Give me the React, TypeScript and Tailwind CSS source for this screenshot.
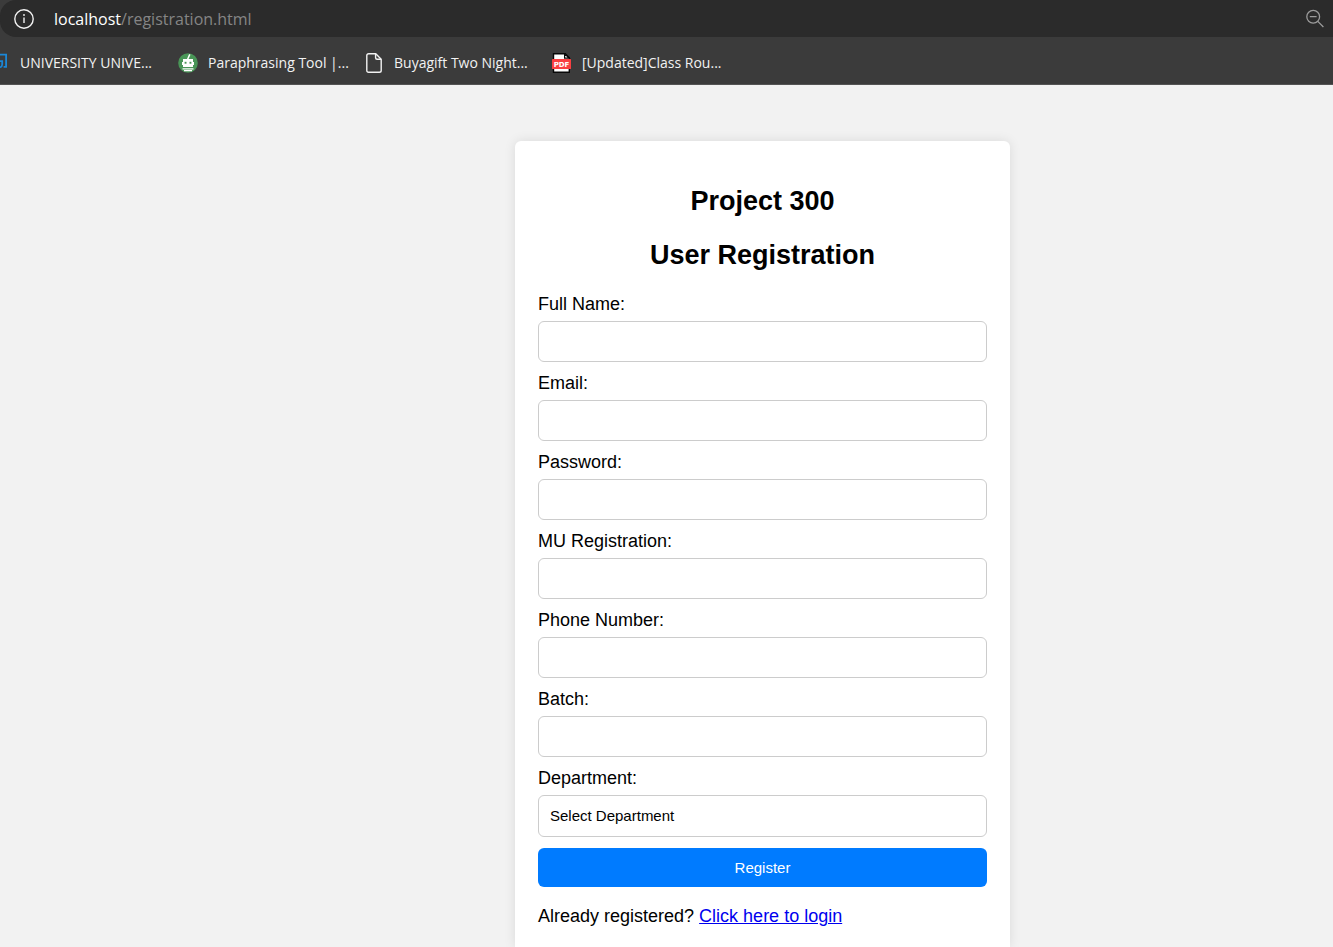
const fields = [
  { id: "name", label: "Full Name:", type: "text" },
  { id: "email", label: "Email:", type: "email" },
  { id: "password", label: "Password:", type: "password" },
  { id: "registration", label: "MU Registration:", type: "text" },
  { id: "phone", label: "Phone Number:", type: "tel" },
  { id: "batch", label: "Batch:", type: "text" },
];

function InfoIcon() {
  return (
    <svg className="size-5 shrink-0" viewBox="0 0 20 20" fill="none" stroke="#f2f2f2" strokeWidth="1.4" aria-hidden="true">
      <circle cx="10" cy="10" r="9.2" />
      <path d="M10 8.5v5.5" />
      <circle cx="10" cy="6" r="0.9" fill="#f2f2f2" stroke="none" />
    </svg>
  );
}

function ZoomOutIcon() {
  return (
    <svg className="size-5" viewBox="0 0 20 20" fill="none" stroke="#9b9b9b" strokeWidth="1.3" aria-hidden="true">
      <circle cx="8.2" cy="7.8" r="6.4" />
      <path d="M4.8 7.6h6.8M12.8 12.4l5.6 5.6" />
    </svg>
  );
}

function CornerIcon() {
  return (
    <svg className="h-5 w-2 shrink-0" viewBox="0 0 8 20" fill="none" stroke="#1b87d6" strokeWidth="1.8" aria-hidden="true">
      <path d="M0 1.6h6.1v12.2H3.6M0 8.2h2.2v3.2q0 2-2.2 3" />
    </svg>
  );
}

function RobotIcon() {
  return (
    <svg className="size-5 shrink-0" viewBox="0 0 20 20" aria-hidden="true">
      <circle cx="10" cy="10" r="9.8" fill="#499557" />
      <path d="M9.5 6.5 11.8 1.4" stroke="#fff" strokeWidth="1.5" />
      <path d="M5 6h10v3h1v3h-1v2H5v-2H4V9h1z" fill="#fff" />
      <rect x="6.6" y="8.8" width="1.9" height="1.9" fill="#499557" />
      <rect x="11.5" y="8.8" width="1.9" height="1.9" fill="#499557" />
      <path d="M4.5 15.8h11M6 17.6h8" stroke="#fff" strokeWidth="1.3" />
    </svg>
  );
}

function PageIcon() {
  return (
    <svg className="h-5 w-4 shrink-0" viewBox="0 0 16 20" fill="none" stroke="#f2f2f2" strokeWidth="1.4" strokeLinejoin="round" aria-hidden="true">
      <path d="M2.7.8h7.1l5.4 5.4v11.2q0 1.8-1.8 1.8H2.6Q.8 19.2.8 17.4V2.6Q.8.8 2.7.8z" />
      <path d="M9.6 1v3.8q0 1.5 1.5 1.5H15" />
    </svg>
  );
}

function PdfIcon() {
  return (
    <svg className="size-5 shrink-0" viewBox="0 0 20 20" aria-hidden="true">
      <path d="M1.5.8h11.8l4 4v14.4H1.5z" fill="#fff" stroke="#080808" strokeWidth="1.4" />
      <path d="M12.6.8v4.4h4.7z" fill="#fff" stroke="#080808" strokeWidth="1.2" />
      <rect x="0" y="6" width="19" height="10" rx="0.6" fill="#f93f41" />
      <text x="9.5" y="13.5" textAnchor="middle" fill="#fff" fontSize="7" fontWeight="700" fontFamily="DejaVu Sans, sans-serif">PDF</text>
    </svg>
  );
}

export default function App() {
  return (
    <div className="flex min-h-screen flex-col bg-[#f2f2f2] font-['Liberation_Sans',Arial,sans-serif] text-lg text-black">
      <header className="border-b border-[#545454] bg-[#3b3b3b] font-['Open_Sans','Noto_Sans',sans-serif] text-sm text-[#f2f2f2]">
        <div className="flex h-[37px] items-center justify-between rounded-l-2xl bg-[#2b2b2b] pr-2 pl-[14px]">
          <div className="flex items-center gap-5">
            <button type="button" aria-label="Site information">
              <InfoIcon />
            </button>
            <span className="text-base text-[#858585]">
              <span className="text-white">localhost</span>/registration.html
            </span>
          </div>
          <button type="button" aria-label="Zoom out">
            <ZoomOutIcon />
          </button>
        </div>
        <nav className="flex h-[47px] items-center gap-5 pt-1 whitespace-nowrap" aria-label="Bookmarks">
          <a href="#university" className="flex w-[158px] items-center gap-3">
            <CornerIcon />
            UNIVERSITY UNIVE...
          </a>
          <a href="#paraphrasing" className="flex w-[168px] items-center gap-[10px]">
            <RobotIcon />
            Paraphrasing Tool |...
          </a>
          <a href="#buyagift" className="flex w-[166px] items-center gap-3">
            <PageIcon />
            Buyagift Two Night...
          </a>
          <a href="#updated" className="flex items-center gap-[10px]">
            <PdfIcon />
            [Updated]Class Rou...
          </a>
        </nav>
      </header>

      <main className="flex flex-1 justify-center pt-14 pl-48">
        <section className="w-full max-w-[495px] rounded-t-md bg-white px-[23px] pt-11 shadow-[0_0_12px_rgba(0,0,0,0.1)]">
          <h2 className="text-center text-[27px] leading-8 font-bold">Project 300</h2>
          <h2 className="mt-[22px] text-center text-[27px] leading-8 font-bold">User Registration</h2>
          <form className="mt-[23px] flex flex-col gap-[11px]" onSubmit={(event) => event.preventDefault()}>
            {fields.map((field) => (
              <div key={field.id} className="flex flex-col gap-[7px]">
                <label htmlFor={field.id} className="leading-5">
                  {field.label}
                </label>
                <input id={field.id} type={field.type} className="h-[41px] w-full rounded-md border border-[#cccccc] bg-white px-[11px] text-[15px]" />
              </div>
            ))}
            <div className="flex flex-col gap-[7px]">
              <label htmlFor="department" className="leading-5">
                Department:
              </label>
              <select id="department" className="h-[42px] w-full appearance-none rounded-md border border-[#cccccc] bg-white px-[11px] text-[15px]">
                <option>Select Department</option>
              </select>
            </div>
            <button type="submit" className="h-[39px] w-full rounded-md bg-[#007bff] text-[15px] text-white">
              Register
            </button>
          </form>
          <p className="mt-[19px] leading-5">
            Already registered?{" "}
            <a href="#login" className="text-[#0000ee] underline">
              Click here to login
            </a>
          </p>
        </section>
      </main>
    </div>
  );
}
